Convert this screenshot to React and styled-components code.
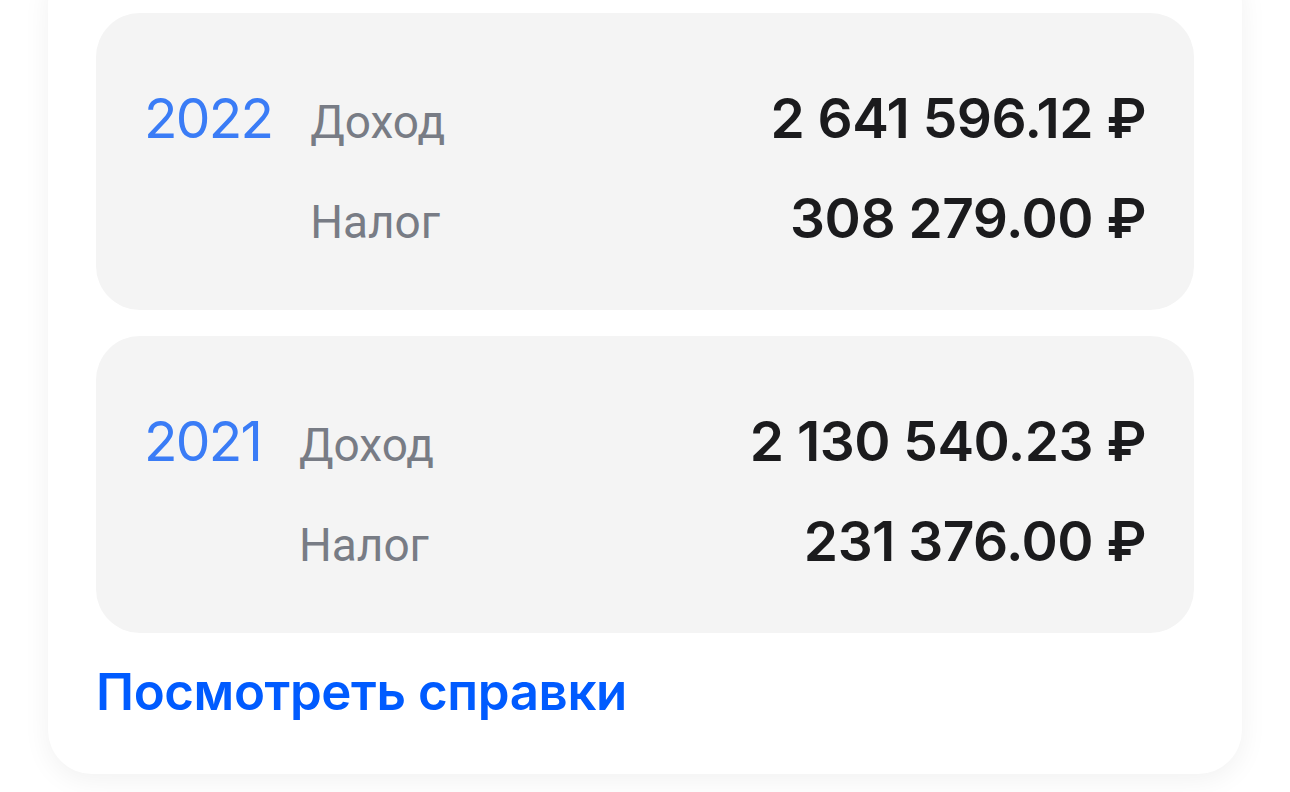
import React from 'react';
import styled, { createGlobalStyle } from 'styled-components';

const GlobalStyle = createGlobalStyle`
    body {
        margin: 0;
        background: #fff;
        font-family: Inter, "Noto Sans", "Liberation Sans", sans-serif;
        -webkit-font-smoothing: antialiased;
    }
`;

const Page = styled.div`
    height: 792px;
    overflow: hidden;
    padding: 0 48px;
`;

const Card = styled.div`
    margin-top: -40px;
    padding: 53px 48px 52px;
    background: #fff;
    border-radius: 44px;
    box-shadow: 0 6px 28px rgba(0, 0, 0, 0.06);
    display: flex;
    flex-direction: column;
    gap: 26px;
`;

const YearBlock = styled.div`
    background: #f4f4f4;
    border-radius: 44px;
    padding: 55px 48px 42px 48px;
    display: grid;
    grid-template-columns: auto auto 1fr;
    align-items: baseline;
    column-gap: 38px;
    font-size: 55px;
    line-height: 100px;
`;

const Year = styled.span`
    color: #3a7cf6;
    font-weight: 400;
    letter-spacing: -1.8px;
`;

const Label = styled.span`
    grid-column: 2;
    color: #787c85;
    font-family: Roboto, "Noto Sans", sans-serif;
    font-size: 46px;
    line-height: 1;
    font-weight: 400;
`;

const Amount = styled.span`
    grid-column: 3;
    text-align: right;
    color: #1b1b1d;
    font-weight: 600;
    letter-spacing: -0.5px;
`;

const Link = styled.a`
    margin-top: 3px;
    color: #005bff;
    font-size: 51px;
    line-height: 60px;
    font-weight: 600;
    text-decoration: none;
    cursor: pointer;
    letter-spacing: -0.4px;
`;

const years = [
    { year: '2022', income: '2 641 596.12 ₽', tax: '308 279.00 ₽' },
    { year: '2021', income: '2 130 540.23 ₽', tax: '231 376.00 ₽' },
];

const App = () => {
    return (
        <Page>
            <GlobalStyle />
            <Card>
                {years.map((item) => (
                    <YearBlock key={item.year}>
                        <Year>{item.year}</Year>
                        <Label>Доход</Label>
                        <Amount>{item.income}</Amount>
                        <Label>Налог</Label>
                        <Amount>{item.tax}</Amount>
                    </YearBlock>
                ))}
                <Link>Посмотреть справки</Link>
            </Card>
        </Page>
    );
};

export default App;
